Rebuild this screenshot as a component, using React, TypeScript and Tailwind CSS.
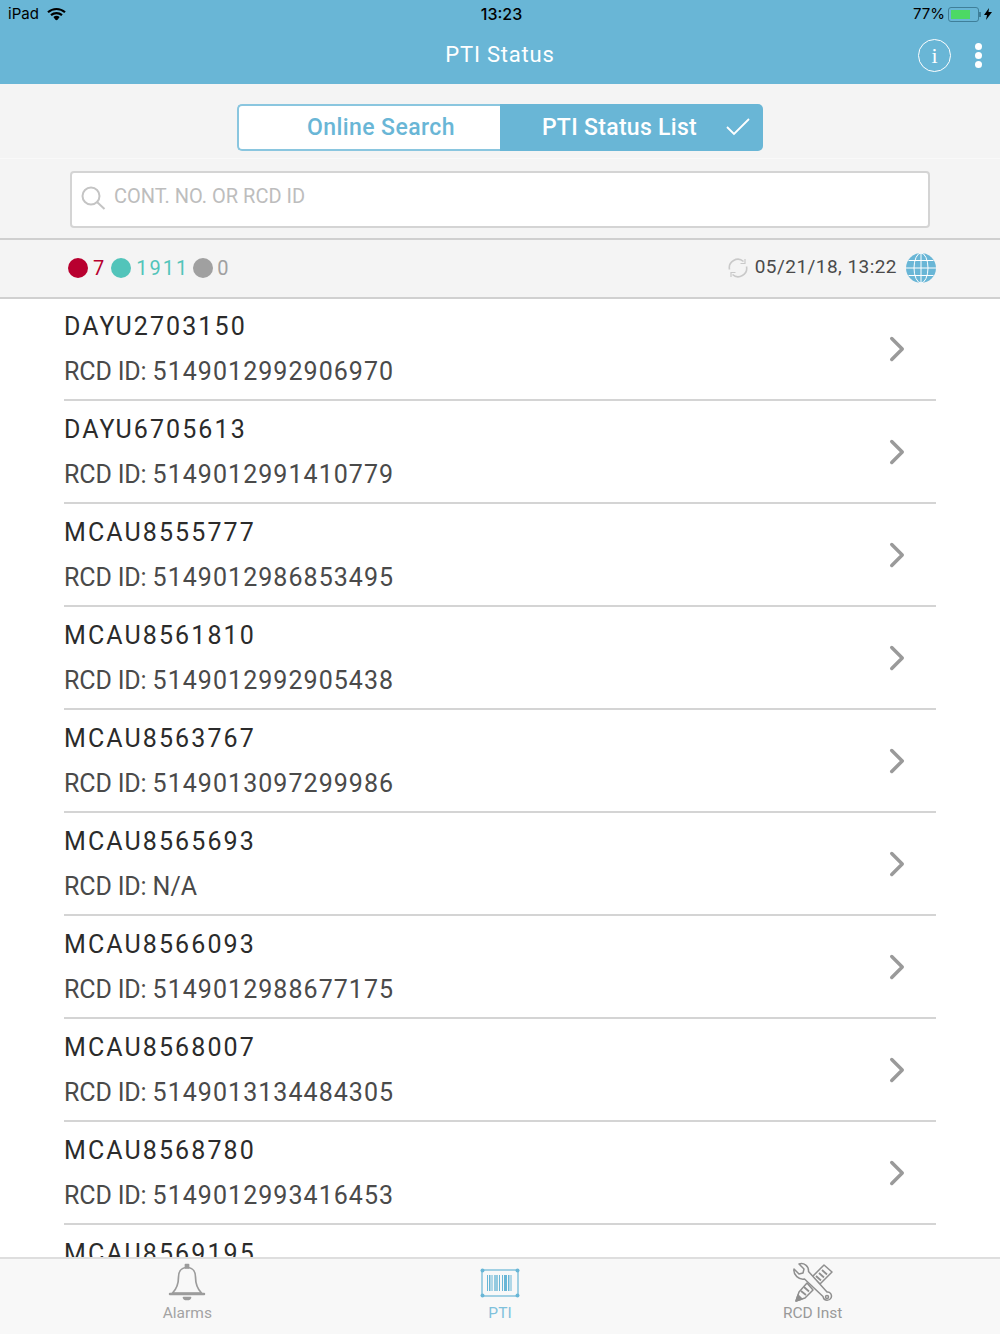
import { ChevronRight } from 'lucide-react';

const rows = [
    { id: 'DAYU2703150', rcd: '5149012992906970' },
    { id: 'DAYU6705613', rcd: '5149012991410779' },
    { id: 'MCAU8555777', rcd: '5149012986853495' },
    { id: 'MCAU8561810', rcd: '5149012992905438' },
    { id: 'MCAU8563767', rcd: '5149013097299986' },
    { id: 'MCAU8565693', rcd: 'N/A' },
    { id: 'MCAU8566093', rcd: '5149012988677175' },
    { id: 'MCAU8568007', rcd: '5149013134484305' },
    { id: 'MCAU8568780', rcd: '5149012993416453' },
    { id: 'MCAU8569195', rcd: '5149012990012846' },
];

const WifiIcon = () => (
    <svg width="19" height="14" viewBox="0 0 19 14" fill="none" stroke="#000" strokeWidth="2.2">
        <path d="M1 5.2C5.8 .9 13.2 .9 18 5.2" />
        <path d="M4 8.2c3.2-2.7 7.8-2.7 11 0" />
        <circle cx="9.5" cy="11.6" r="1.6" fill="#000" stroke="none" />
        <path d="M7 10.8c1.5-1 3.5-1 5 0" />
    </svg>
);

const Bell = () => (
    <svg width="40" height="40" viewBox="0 0 40 40" fill="none" stroke="#9c9c9c" strokeWidth="1.7" strokeLinejoin="round">
        <path d="M20 4.500c-5.600 0-8.500 4-8.500 9.500 0 7-1.500 11.500-6 16h29c-4.500-4.500-6-9-6-16 0-5.500-2.900-9.500-8.500-9.500z" />
        <path d="M3 31h34" strokeWidth="2.500" strokeLinecap="round" />
        <path d="M18.500 1.500h3V5h-3z" fill="#9c9c9c" />
        <path d="M16.500 34.500c.5 2.500 6.500 2.500 7 0z" fill="#9c9c9c" />
    </svg>
);

const Barcode = () => (
    <svg width="40" height="30" viewBox="0 0 40 30" fill="none">
        <rect x="2" y="2" width="36" height="26" stroke="#69b6d6" strokeWidth="1.200" />
        <circle cx="2.500" cy="2.500" r="2" fill="#69b6d6" />
        <circle cx="37.500" cy="2.500" r="2" fill="#69b6d6" />
        <circle cx="2.500" cy="27.500" r="2" fill="#69b6d6" />
        <circle cx="37.500" cy="27.500" r="2" fill="#69b6d6" />
        <g fill="#69b6d6">
            <rect x="7" y="7" width="1" height="16" />
            <rect x="9" y="7" width="1.500" height="16" />
            <rect x="11.500" y="7" width="1" height="16" />
            <rect x="14" y="7" width="4" height="16" opacity="0.7" />
            <rect x="19" y="7" width="1" height="16" />
            <rect x="22" y="7" width="1" height="16" />
            <rect x="24" y="7" width="3" height="16" />
            <rect x="28" y="7" width="1.500" height="16" />
            <rect x="30.500" y="7" width="1" height="16" />
        </g>
    </svg>
);

const Tools = () => (
    <svg width="44" height="42" viewBox="0 0 44 42" fill="none" stroke="#8f8f8f" strokeWidth="1.500" strokeLinejoin="round">
        {/* pencil, upper and lower part */}
        <path d="M33 3l8 7-12 12-8-7z" />
        <path d="M31 8l5 4.500M28 11l5 4.500M25 14l5 4.500" strokeWidth="1.800" />
        <path d="M16 21L8 30l-3 9 9-3 8-8z" />
        <path d="M13 25l5 4.500M10 29l5 4" strokeWidth="1.800" />
        <path d="M5 39l2-6 4 4z" fill="#8f8f8f" />
        {/* wrench goes over the pencil */}
        <path fill="#f8f8f8" d="M3 7l5 5 4-1 1-4-5-5c5-1.500 10 2 9.500 7.500L36 30c3-.5 5.500 3 4 6s-6.500 3-7.500 0l-.5-1.500L13.500 17C8 18 2 13 3 7z" />
        <circle cx="36" cy="35" r="1.500" />
    </svg>
);

export default function App() {
    return (
        <div className="w-[1000px] h-[1334px] flex flex-col overflow-hidden bg-white font-['Roboto',sans-serif]">
            {/* Status + title bar */}
            <header className="h-[84px] shrink-0 bg-[#69b6d6] flex flex-col">
                <div className="h-[28px] px-2 grid grid-cols-3 items-center text-black text-[15px] font-['Inter',sans-serif]">
                    <div className="flex items-center gap-2">
                        <span>iPad</span>
                        <WifiIcon />
                    </div>
                    <div className="text-center font-medium text-[16px] pl-[3px]">13:23</div>
                    <div className="flex items-center justify-end gap-[3px]">
                        <span>77%</span>
                        <div className="flex items-center">
                            <div className="w-[31px] h-[15px] border border-[#3f7f9a] rounded-[3px] p-[2px]">
                                <div className="w-[77%] h-full bg-[#4cd964]" />
                            </div>
                            <div className="w-[2px] h-[5px] bg-[#3f7f9a]" />
                        </div>
                        <svg width="8" height="12" viewBox="0 0 8 12" fill="#000"><path d="M5 0L0 7h3l-1 5 6-8H4.500z" /></svg>
                    </div>
                </div>
                <div className="relative h-[52px] flex items-center justify-center">
                    <span className="text-white text-[22px] tracking-[0.8px]">PTI Status</span>
                    <div className="absolute right-[13px] top-[11px] flex items-center gap-[18px]">
                        <div className="w-[33px] h-[33px] rounded-full border border-white flex items-center justify-center text-white text-[22px] font-['Liberation_Serif',serif]">i</div>
                        <div className="w-[18px] flex flex-col items-center gap-[2px]">
                            <span className="w-[7px] h-[7px] rounded-full bg-white" />
                            <span className="w-[7px] h-[7px] rounded-full bg-white" />
                            <span className="w-[7px] h-[7px] rounded-full bg-white" />
                        </div>
                    </div>
                </div>
            </header>

            {/* Segmented control */}
            <div className="h-[75px] shrink-0 bg-[#f4f4f4] border-b border-[#f9f9f9] flex items-start justify-center pt-[20px]">
                <div className="flex w-[526px] h-[47px]">
                    <div className="w-[263px] bg-white border-2 border-r-0 border-[#8ac6df] rounded-l-[5px] flex items-center justify-center text-[#69b6d6] text-[23px] font-medium tracking-[0.4px] pl-[23px] pt-[1px]">Online Search</div>
                    <div className="relative w-[263px] bg-[#69b6d6] rounded-r-[5px] flex items-center justify-center text-white text-[23px] font-medium tracking-[0.3px] pr-[24px] pt-[1px]">
                        PTI Status List
                        <svg className="absolute right-[13px] top-[14px]" width="24" height="18" viewBox="0 0 24 18" fill="none" stroke="#fff" strokeWidth="1.800">
                            <path d="M1 9l7 7L23 1" />
                        </svg>
                    </div>
                </div>
            </div>

            {/* Search */}
            <div className="h-[81px] shrink-0 bg-[#f4f4f4] border-b-2 border-[#cfcfcf] px-[70px] pt-[12px]">
                <div className="h-[57px] bg-white border-2 border-[#d4d4d4] rounded-[4px] flex items-center pl-[8px] gap-[8px]">
                    <svg className="mb-[3px]" width="26" height="26" viewBox="0 0 26 26" fill="none" stroke="#c4c4c4" strokeWidth="2">
                        <circle cx="11" cy="11" r="8.500" />
                        <path d="M17 17l7.500 7" />
                    </svg>
                    <span className="text-[#bdbdbd] text-[20px] pb-[7px]">CONT. NO. OR RCD ID</span>
                </div>
            </div>

            {/* Counts and last sync */}
            <div className="h-[59px] shrink-0 bg-[#f4f4f4] border-b-2 border-[#d0d0d0] pl-[68px] pr-[64px] pb-[2px] flex items-center justify-between text-[20px]">
                <div className="flex items-center">
                    <span className="w-[20px] h-[20px] rounded-full bg-[#b8002f]" />
                    <span className="ml-[5px] text-[#b8002f]">7</span>
                    <span className="ml-[7px] w-[20px] h-[20px] rounded-full bg-[#52c4ba]" />
                    <span className="ml-[5px] text-[#52c4ba] tracking-[2px]">1911</span>
                    <span className="ml-[4px] w-[20px] h-[20px] rounded-full bg-[#a0a0a0]" />
                    <span className="ml-[4px] text-[#a0a0a0]">0</span>
                </div>
                <div className="flex items-center">
                    <svg width="20" height="20" viewBox="0 0 20 20" fill="none" stroke="#c9c9c9" strokeWidth="1.600">
                        <path d="M1.500 11.500A8.500 8.500 0 0 1 15.500 3.500" />
                        <path d="M18.500 8.500A8.500 8.500 0 0 1 4.500 16.500" />
                        <path d="M17 1v4.500h-4.500M3 19v-4.500h4.500" strokeWidth="1.200" />
                    </svg>
                    <span className="ml-[7px] text-[#4a4a4a] text-[19px] tracking-[0.45px]">05/21/18, 13:22</span>
                    <svg className="ml-[9px]" width="30" height="30" viewBox="0 0 30 30" fill="#69b6d6" stroke="#fff" strokeWidth="1">
                        <circle cx="15" cy="15" r="15" stroke="none" />
                        <ellipse cx="15" cy="15" rx="7" ry="15" fill="none" />
                        <path d="M15 0v30M0 15h30M2.500 7.500h25M2.500 22.500h25" fill="none" />
                    </svg>
                </div>
            </div>

            {/* Container list */}
            <div className="flex-1 min-h-0 overflow-hidden px-[64px] mt-[-1px]">
                {rows.map((row) => (
                    <div key={row.id} className="h-[103px] border-b-2 border-[#d4d4d4] flex items-center justify-between">
                        <div className="text-[25px] leading-[45px] mt-[1px]">
                            <div className="text-[#2b2b2b] tracking-[2.100px]">{row.id}</div>
                            <div className="text-[#4a4a4a]">
                                <span className="tracking-[-0.15px]">RCD ID: </span>
                                {row.rcd === 'N/A' ? (
                                    <span>{row.rcd}</span>
                                ) : (
                                    <span className="tracking-[1.050px]">{row.rcd}</span>
                                )}
                            </div>
                        </div>
                        <ChevronRight className="mr-[18px]" size={42} color="#9a9a9a" strokeWidth={2} />
                    </div>
                ))}
            </div>

            {/* Tab bar */}
            <nav className="h-[77px] shrink-0 bg-[#f8f8f8] border-t-2 border-[#dedede] px-[31px] pt-[2px] grid grid-cols-3 content-start text-[15.500px]">
                <div className="flex flex-col items-center text-[#a3a3a3]">
                    <div className="h-[44px] flex items-center"><Bell /></div>
                    <span className="leading-[16px]">Alarms</span>
                </div>
                <div className="flex flex-col items-center text-[#7fc1dc]">
                    <div className="h-[44px] flex items-center"><Barcode /></div>
                    <span className="leading-[16px]">PTI</span>
                </div>
                <div className="flex flex-col items-center text-[#9a9a9a]">
                    <div className="h-[44px] flex items-center"><Tools /></div>
                    <span className="leading-[16px]">RCD Inst</span>
                </div>
            </nav>
        </div>
    );
}
